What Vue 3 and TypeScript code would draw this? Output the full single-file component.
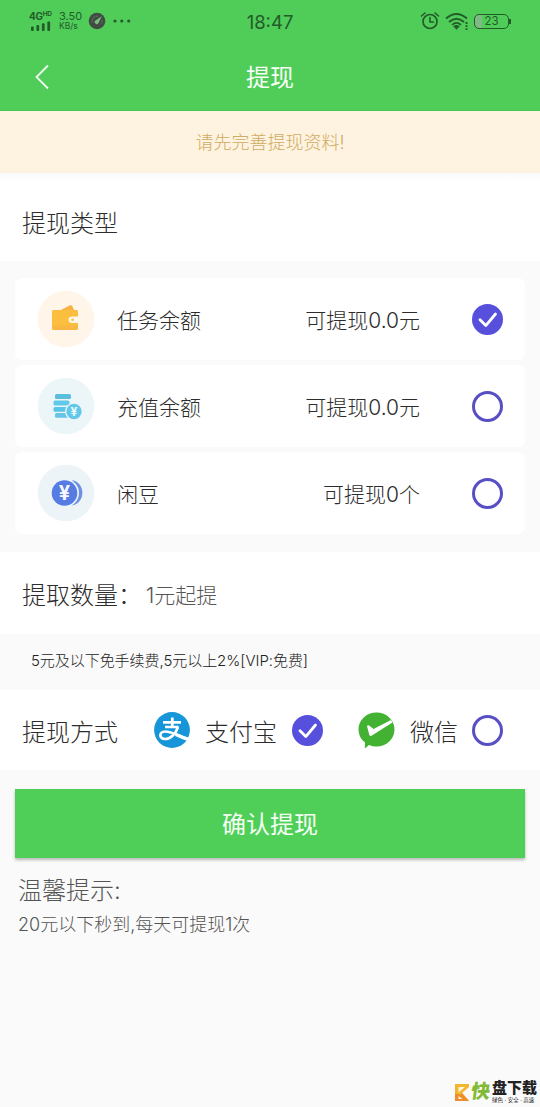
<script setup lang="ts">
import { ref } from 'vue'

interface Balance {
  id: string
  name: string
  amount: string
}

const balances: Balance[] = [
  { id: 'task', name: '任务余额', amount: '可提现0.0元' },
  { id: 'recharge', name: '充值余额', amount: '可提现0.0元' },
  { id: 'bean', name: '闲豆', amount: '可提现0个' },
]
const selected = ref('task')
const method = ref('alipay')
</script>

<template>
  <div class="screen">
    <header class="top">
      <div class="status">
        <div class="status-left">
          <div class="signal">
            <span class="net">4G<sup>HD</sup></span>
            <svg width="24" height="10" viewBox="0 0 24 11">
              <g fill="#235c2a">
                <rect x="1" y="6" width="3" height="5" rx="1" />
                <rect x="7" y="4.500" width="3" height="6.500" rx="1" />
                <rect x="13" y="2.500" width="3" height="8.500" rx="1" />
                <rect x="19" y="0.500" width="3" height="10.500" rx="1" />
              </g>
            </svg>
          </div>
          <div class="speed"><span class="rate">3.50</span><span class="unit">KB/s</span></div>
          <svg class="gauge" width="18" height="18" viewBox="0 0 18 18">
            <circle cx="9" cy="9" r="8.300" fill="#414b43" />
            <path d="M4 10.500a5.300 5.300 0 0 1 6-6.300M14 8a5 5 0 0 1-.5 3.500" fill="none" stroke="#59735d" stroke-width="1" />
            <path d="M13.800 4.200 10.500 11a2 2 0 1 1-3-2.500z" fill="#79bd80" />
          </svg>
          <svg class="dots" width="18" height="4" viewBox="0 0 18 4">
            <g fill="#235c2a"><circle cx="2" cy="2" r="1.600" /><circle cx="8.800" cy="2" r="1.600" /><circle cx="15.700" cy="2" r="1.600" /></g>
          </svg>
        </div>
        <span class="clock">18:47</span>
        <div class="status-right">
          <svg width="20" height="20" viewBox="0 0 20 20" fill="none" stroke="#235c2a" stroke-linecap="round">
            <circle cx="10" cy="10.500" r="7" stroke-width="1.700" />
            <path d="M10 6.500V11h3.500" stroke-width="1.600" />
            <path d="M1.500 5 5 2M15 2l3.500 3" stroke-width="1.600" />
          </svg>
          <svg class="wifi" width="24" height="19" viewBox="0 0 24 19" fill="none" stroke="#235c2a">
            <path d="M1 6.500Q11.500-2.500 22 6.500M4 10q7.500-6.500 15 0" stroke-width="2" />
            <path d="M7 12.800q4.500-3.700 9 0" stroke-width="1.700" />
            <path d="m8.200 14.200 3.300 3.600 3.300-3.600q-3.300-2.200-6.600 0z" fill="#235c2a" stroke="none" />
            <path d="M21.500 10v2M21.500 13.300v1.700M21.500 16.300V18" stroke-width="2" />
          </svg>
          <div class="battery"><span>23</span></div>
        </div>
      </div>
      <nav class="nav">
        <svg class="back" width="16" height="26" viewBox="0 0 16 26">
          <path d="M14 1.500 2.500 13 14 24.500" fill="none" stroke="#effcf0" stroke-width="1.800" />
        </svg>
        <h1>提现</h1>
      </nav>
    </header>

    <div class="notice">请先完善提现资料!</div>
    <h2 class="heading">提现类型</h2>

    <main class="cards">
      <div v-for="item in balances" :key="item.id" class="card" @click="selected = item.id">
        <svg class="avatar" width="58" height="58" viewBox="0 0 58 58">
          <template v-if="item.id === 'task'">
            <circle cx="29" cy="29" r="28.300" fill="#fff6e9" />
            <path d="m24 20 8.500-4.500q1.800-.8 3 1L37 20z" fill="#f5b345" />
            <path d="M16.500 20h23q1.500 0 1.500 1.500v5h-5.500q-4 0-4 3.200t4 3.300H41v5.500q0 1.500-1.500 1.500h-23q-1.500 0-1.500-1.500v-17q0-1.500 1.500-1.500z" fill="#fbbe3f" />
            <path d="M15 35.500h26v3q0 1.500-1.500 1.500h-23q-1.500 0-1.500-1.500z" fill="#f4ad49" opacity=".45" />
            <circle cx="35.500" cy="29.800" r="1.300" fill="#fbbe3f" />
          </template>
          <template v-else-if="item.id === 'recharge'">
            <circle cx="29" cy="29" r="28.300" fill="#ecf6f9" />
            <rect x="18" y="17" width="16" height="5" rx="1.500" fill="#5abfdf" />
            <rect x="16.500" y="23.500" width="16" height="5" rx="1.500" fill="#61c9e8" />
            <rect x="16.500" y="30" width="14" height="4.800" rx="1.500" fill="#58c4e8" />
            <rect x="18" y="36" width="14" height="4.800" rx="1.500" fill="#65c5e4" />
            <circle cx="37" cy="34.500" r="9" fill="#ecf6f9" />
            <circle cx="37" cy="34.500" r="7.700" fill="#63c8e8" />
            <text x="37" y="38.700" text-anchor="middle" font-size="12" font-weight="700" fill="#effcff">¥</text>
          </template>
          <template v-else>
            <circle cx="29" cy="29" r="28.300" fill="#ecf4f8" />
            <path d="M35 16.300c14 2 14 23.500-.5 25.300q5-5 5-12.600t-4.500-12.700z" fill="#6f90e4" />
            <circle cx="28" cy="29" r="14" fill="#ecf4f8" />
            <circle cx="27.500" cy="29" r="12.800" fill="#567be2" />
            <text x="27.500" y="36" text-anchor="middle" font-size="20" font-weight="700" fill="#f5f8ff">¥</text>
          </template>
        </svg>
        <span class="name">{{ item.name }}</span>
        <span class="amount">{{ item.amount }}</span>
        <span class="radio" :class="{ on: selected === item.id }">
          <svg v-if="selected === item.id" width="30" height="30" viewBox="0 0 30 30">
            <path d="m7 15.800 5.800 5.800L22.500 10" fill="none" stroke="#fff" stroke-width="2.800" stroke-linecap="round" stroke-linejoin="round" />
          </svg>
        </span>
      </div>
    </main>

    <section class="quantity">
      <span class="label">提取数量：</span><span class="placeholder">1元起提</span>
    </section>
    <p class="fee">5元及以下免手续费,5元以上2%[VIP:免费]</p>

    <section class="methods">
      <span class="label">提现方式</span>
      <div class="method alipay" @click="method = 'alipay'">
        <svg width="36" height="36" viewBox="0 0 36 36">
          <circle cx="18" cy="18" r="17.900" fill="#1695d8" />
          <g fill="none" stroke="#fff">
            <path d="M9 10.300h18M18.300 5.500v9.500M11 15h13.500" stroke-width="2.700" />
            <path d="M24 15C22 21.500 16.500 27 11 27c-6.300 0-6-7.500 0-7.500 6.500 0 12.500 4 24.500 8.500" stroke-width="2.700" />
            <path d="M22 22.500c4 2 8 3.500 13 5" stroke-width="3.500" />
          </g>
        </svg>
        <span class="method-name">支付宝</span>
        <span class="radio" :class="{ on: method === 'alipay' }">
          <svg v-if="method === 'alipay'" width="30" height="30" viewBox="0 0 30 30">
            <path d="m7 15.800 5.800 5.800L22.500 10" fill="none" stroke="#fff" stroke-width="2.800" stroke-linecap="round" stroke-linejoin="round" />
          </svg>
        </span>
      </div>
      <div class="method wechat" @click="method = 'wechat'">
        <svg width="37" height="37" viewBox="0 0 37 37">
          <path d="M18.500.5C28.500.5 36.500 8 36.500 17.500s-8 17-18 17q-4 0-7.500-1.500L6.800 36.500l.2-6Q.5 25.500.5 17.500C.5 8 8.500.5 18.500.5z" fill="#43b233" />
          <path d="M9 14q1-1.500 2.500-.2l4 3.200L33 8l1.500 2.500-21 13.200q-1.400.7-2.200-.8z" fill="#fff" />
        </svg>
        <span class="method-name">微信</span>
        <span class="radio" :class="{ on: method === 'wechat' }">
          <svg v-if="method === 'wechat'" width="30" height="30" viewBox="0 0 30 30">
            <path d="m7 15.800 5.800 5.800L22.500 10" fill="none" stroke="#fff" stroke-width="2.800" stroke-linecap="round" stroke-linejoin="round" />
          </svg>
        </span>
      </div>
    </section>

    <button class="submit" type="button">确认提现</button>
    <section class="tips">
      <h3>温馨提示:</h3>
      <p>20元以下秒到,每天可提现1次</p>
    </section>

    <footer class="brand">
      <svg width="14" height="19" viewBox="0 0 14 19">
        <path d="M0 1h14v3L7 10l7 8H0z" fill="#f3b52c" />
        <path d="M0 11v7h14L7 10 4 12.500V11z" fill="#ee8f2d" />
        <path d="M3.500 4v5.500L10 4zM3.500 13v3h4z" fill="#fff6de" />
      </svg>
      <span class="brand-kuai">快</span>
      <span class="brand-copy"><b>盘下载</b><small>绿色 · 安全 · 高速</small></span>
    </footer>
  </div>
</template>

<style>
body {
  margin: 0;
  background: #fafafa;
}
</style>

<style scoped>
* {
  box-sizing: border-box;
}
.screen {
  width: 540px;
  height: 1107px;
  display: flex;
  flex-direction: column;
  overflow: hidden;
  background: #fafafa;
  color: #2c2c2c;
  font-family: Inter, "Noto Sans CJK SC", sans-serif;
  font-weight: 300;
  white-space: nowrap;
}
h1, h2, h3, p {
  margin: 0;
  font-weight: 300;
}
svg {
  display: block;
  flex: none;
}
.top {
  height: 111px;
  flex: none;
  background: #50cc59;
  border-bottom: 1px solid #48c653;
}
.status {
  height: 44px;
  display: grid;
  grid-template-columns: 1fr 60px 1fr;
  align-items: center;
  color: #235c2a;
}
.status-left {
  display: flex;
  align-items: center;
  padding: 0 0 2px 29px;
}
.signal {
  width: 30px;
  display: flex;
  flex-direction: column;
}
.net {
  height: 9px;
  display: flex;
  font: 700 10px/9px Inter, sans-serif;
  letter-spacing: -0.3px;
}
.net sup {
  font-size: 6.500px;
  line-height: 5px;
}
.speed {
  width: 30px;
  display: flex;
  flex-direction: column;
  font-family: Inter, sans-serif;
  font-weight: 400;
}
.rate {
  font-size: 11px;
  line-height: 11px;
}
.unit {
  font-size: 8.500px;
  line-height: 9px;
}
.gauge {
  margin-left: -1px;
}
.dots {
  margin-left: 7px;
}
.clock {
  padding-bottom: 1px;
  text-align: center;
  font: 400 18.500px/24px Inter, sans-serif;
}
.status-right {
  display: flex;
  align-items: center;
  justify-content: flex-end;
  padding-right: 31px;
  padding-bottom: 2px;
}
.wifi {
  margin: 0 5px;
}
.battery {
  position: relative;
  width: 35px;
  height: 15px;
  border: 1.500px solid #235c2a;
  border-radius: 5px;
  background: linear-gradient(90deg, #7fb985 7px, transparent 7px);
  text-align: center;
  font: 400 11.500px/13px Inter, sans-serif;
}
.battery::after {
  content: "";
  position: absolute;
  right: -3px;
  top: 4px;
  width: 2px;
  height: 5px;
  background: #235c2a;
}
.nav {
  height: 66px;
  display: grid;
  grid-template-columns: 100px 1fr 100px;
  align-items: center;
}
.back {
  margin-left: 34px;
}
.nav h1 {
  padding-top: 2px;
  text-align: center;
  color: #f5fff5;
  font-size: 24px;
  line-height: 30px;
  font-weight: 400;
}
.notice {
  height: 62px;
  flex: none;
  padding-top: 1px;
  background: #fef3e0;
  color: #d0ab62;
  font-size: 18px;
  line-height: 62px;
  text-align: center;
}
.heading {
  height: 88px;
  flex: none;
  padding: 7px 0 0 22px;
  background: linear-gradient(#fafafa, #fff 9px);
  font-size: 24px;
  line-height: 88px;
}
.cards {
  height: 291px;
  flex: none;
  display: flex;
  flex-direction: column;
  gap: 5px;
  padding: 17px 15px 18px;
}
.card {
  height: 82px;
  display: flex;
  align-items: center;
  padding: 0 22px;
  border-radius: 7px;
  background: #fff;
  font-size: 21px;
}
.name {
  flex: 1;
  padding-left: 22px;
}
.amount {
  margin-right: 52px;
}
.radio {
  flex: none;
  width: 31px;
  height: 31px;
  border: 3px solid #5750c4;
  border-radius: 50%;
}
.radio.on {
  background: #5650dc;
  border-color: #5650dc;
}
.radio svg {
  margin: -2.500px;
}
.quantity {
  height: 82px;
  flex: none;
  display: flex;
  align-items: center;
  padding: 1px 0 0 22px;
  background: #fff;
}
.label {
  font-size: 24px;
}
.quantity .label {
  width: 124px;
}
.placeholder {
  color: #555;
  font-size: 21px;
}
.fee {
  height: 56px;
  flex: none;
  padding-left: 31px;
  color: #222;
  font-size: 15px;
  line-height: 54px;
  letter-spacing: -0.050px;
}
.methods {
  height: 80px;
  flex: none;
  display: flex;
  align-items: center;
  padding: 0 22px;
  background: #fff;
}
.method {
  display: flex;
  align-items: center;
  font-size: 24px;
}
.alipay {
  margin-left: 36px;
}
.wechat {
  margin-left: 35px;
}
.method-name {
  margin: 0 15px;
}
.wechat .method-name {
  margin-right: 14px;
}
.submit {
  height: 69px;
  flex: none;
  margin: 19px 15px 0;
  padding: 1px 0 0;
  border: 0;
  background: #4fcf57;
  box-shadow: 0 2px 3px #0004;
  color: #f5fff5;
  font: 400 24px/69px Inter, "Noto Sans CJK SC", sans-serif;
}
.tips {
  padding: 15px 0 0 18px;
  color: #555;
}
.tips h3 {
  font-size: 24px;
  line-height: 36px;
}
.tips p {
  font-size: 18px;
  line-height: 32px;
}
.brand {
  display: flex;
  align-items: center;
  margin-top: auto;
  padding: 0 3px 3px 455px;
  color: #222;
}
.brand-kuai {
  margin-left: 2px;
  color: #82ba35;
  font-size: 19px;
  line-height: 20px;
  font-weight: 900;
  transform: skewX(-8deg);
}
.brand-copy {
  display: flex;
  flex-direction: column;
  margin-left: 2px;
}
.brand-copy b {
  font-size: 15px;
  line-height: 16px;
  font-weight: 900;
}
.brand-copy small {
  font-size: 5.500px;
  line-height: 8px;
  font-weight: 400;
}
</style>
